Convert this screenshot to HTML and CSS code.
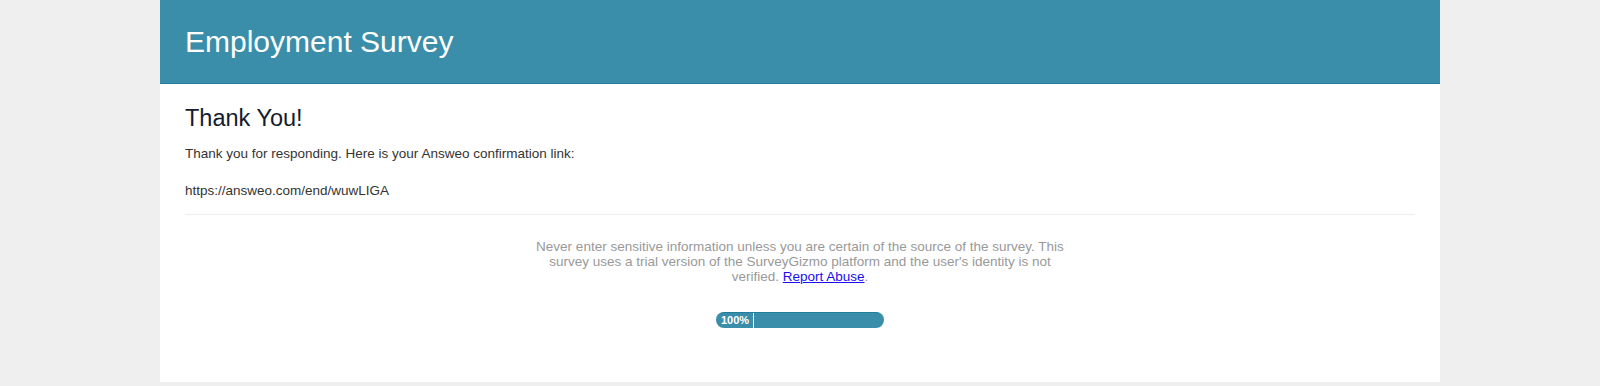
FILE: index.html
```html
<!DOCTYPE html>
<html lang="en">

<head>
    <meta charset="UTF-8">
    <meta name="viewport" content="width=device-width, initial-scale=1.0">
    <title>Employment Survey</title>
    <link rel="stylesheet" href="styles.css">
</head>

<body>
    <div class="survey">
        <header class="survey-header">
            <h1>Employment Survey</h1>
        </header>
        <section class="survey-body">
            <h2>Thank You!</h2>
            <p class="message">Thank you for responding. Here is your Answeo confirmation link:</p>
            <p class="message">https://answeo.com/end/wuwLIGA</p>
            <hr class="divider">
            <div class="footer">
                <p class="disclaimer">Never enter sensitive information unless you are certain of the source of the survey. This survey uses a trial version of the SurveyGizmo platform and the user's identity is not verified. <a href="#">Report Abuse</a>.</p>
                <div class="progress">
                    <span class="progress-label">100%</span>
                    <span class="progress-rest"></span>
                </div>
            </div>
        </section>
    </div>
</body>

</html>
```

FILE: styles.css
```css
* {
    box-sizing: border-box;
}

body {
    margin: 0;
    background-color: #efefef;
    font-family: "Liberation Sans", Arial, sans-serif;
}

.survey {
    width: 1280px;
    margin: 0 auto;
    background-color: #fff;
}

.survey-header {
    height: 84px;
    padding: 25px 25px 0;
    background-color: #3a8ea9;
    border-bottom: 1px solid #1f7f9b;
}

.survey-header h1 {
    margin: 0;
    font-size: 30px;
    line-height: 34px;
    font-weight: normal;
    color: #fff;
}

.survey-body {
    padding: 21px 25px 54px;
}

.survey-body h2 {
    margin: 0 0 14px;
    font-size: 23.5px;
    line-height: 26px;
    font-weight: normal;
    color: #141c2e;
}

.message {
    margin: 0 0 19px;
    font-size: 13.5px;
    line-height: 18px;
    color: #333;
}

.message:last-of-type {
    margin-bottom: 0;
}

.divider {
    margin: 14px 0 0;
    border: none;
    border-top: 1px solid #eee;
}

.footer {
    display: flex;
    flex-direction: column;
    align-items: center;
}

.disclaimer {
    width: 550px;
    margin: 24px 0 0;
    font-size: 13.5px;
    line-height: 15px;
    text-align: center;
    color: #999;
}

.disclaimer a {
    color: #1a0dee;
}

.progress {
    display: flex;
    width: 168px;
    height: 16px;
    margin-top: 28px;
    border-radius: 8px;
    overflow: hidden;
    background-color: #3a8ea9;
    border-top: 1px solid #1f7f9b;
}

.progress-label {
    width: 38px;
    padding-left: 5px;
    border-right: 1px solid #fff;
    font-size: 11px;
    font-weight: bold;
    line-height: 15px;
    color: #fff;
}

.progress-rest {
    flex: 1;
}
```
